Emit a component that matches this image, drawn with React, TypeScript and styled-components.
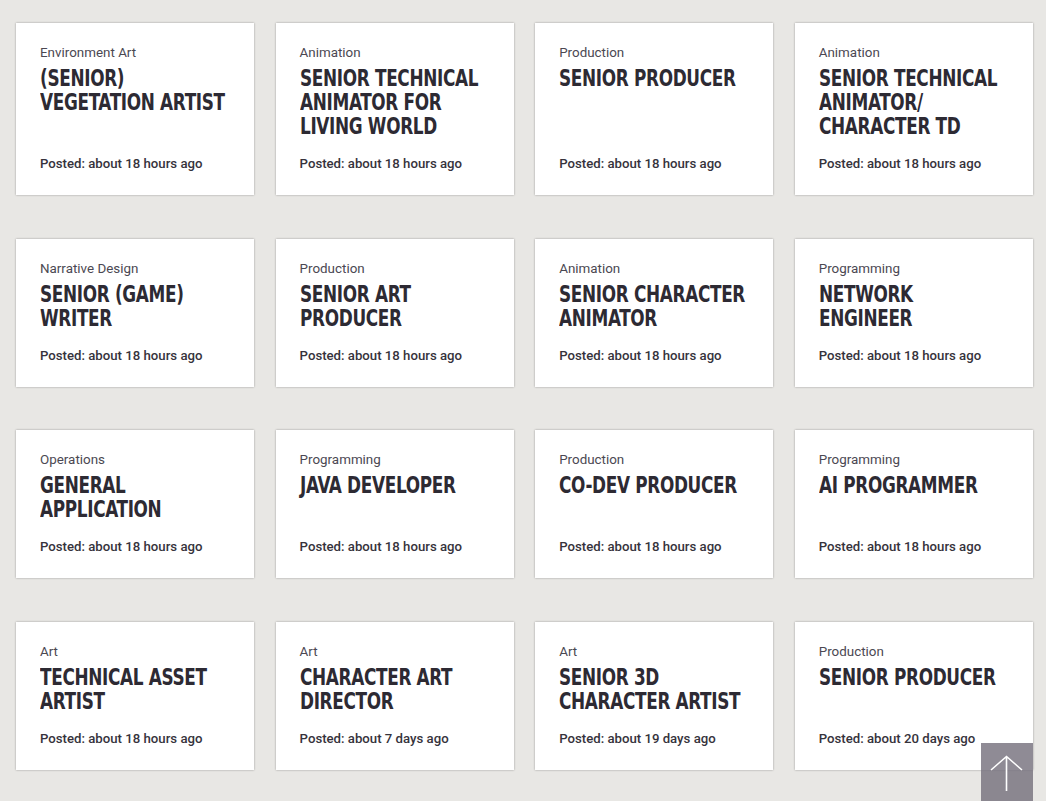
import React from 'react'
import styled, { createGlobalStyle } from 'styled-components'

const GlobalStyle = createGlobalStyle`
  html, body {
    margin: 0;
    padding: 0;
    background: #e8e7e4;
  }
  body {
    font-family: Roboto, 'Liberation Sans', sans-serif;
  }
`

const Page = styled.main`
  padding: 23px 13px 33px 16px;
`

const Grid = styled.section`
  display: grid;
  grid-template-columns: repeat(4, minmax(0, 1fr));
  column-gap: 21.3px;
  row-gap: 43.5px;
`

const Card = styled.a`
  display: flex;
  flex-direction: column;
  min-width: 0;
  background: #ffffff;
  box-shadow: 0 0 2px rgba(0, 0, 0, 0.35);
  padding: 20px 24px 22px;
  text-decoration: none;
  box-sizing: border-box;
`

const Category = styled.div`
  font-size: 13.4px;
  line-height: 20px;
  color: #4b4852;
`

/* condensed display face: DejaVu Sans Condensed squeezed to the narrow proportions */
const Title = styled.h3`
  margin: 3px 0 0;
  font-family: 'DejaVu Sans Condensed', 'DejaVu Sans', sans-serif;
  font-weight: 700;
  font-size: 23px;
  line-height: 24px;
  letter-spacing: -0.4px;
  color: #2d2a33;
  text-transform: uppercase;
  white-space: nowrap;
  transform: scaleX(0.815);
  transform-origin: left top;
`

const Posted = styled.div`
  margin-top: auto;
  padding-top: 17px;
  font-size: 13.2px;
  line-height: 18px;
  font-weight: 500;
  color: #36333c;
`

const ScrollTop = styled.button`
  position: fixed;
  right: 13px;
  bottom: 0;
  width: 52px;
  height: 58px;
  border: none;
  padding: 0;
  background: rgba(118, 114, 126, 0.82);
  display: flex;
  align-items: flex-start;
  justify-content: center;
  cursor: pointer;
`

const jobs = [
  { cat: 'Environment Art', title: ['(Senior)', 'Vegetation Artist'], posted: 'about 18 hours ago' },
  { cat: 'Animation', title: ['Senior Technical', 'Animator for', 'Living World'], posted: 'about 18 hours ago' },
  { cat: 'Production', title: ['Senior Producer'], posted: 'about 18 hours ago' },
  { cat: 'Animation', title: ['Senior Technical', 'Animator/', 'Character TD'], posted: 'about 18 hours ago' },
  { cat: 'Narrative Design', title: ['Senior (Game)', 'Writer'], posted: 'about 18 hours ago' },
  { cat: 'Production', title: ['Senior Art', 'Producer'], posted: 'about 18 hours ago' },
  { cat: 'Animation', title: ['Senior Character', 'Animator'], posted: 'about 18 hours ago' },
  { cat: 'Programming', title: ['Network', 'Engineer'], posted: 'about 18 hours ago' },
  { cat: 'Operations', title: ['General', 'Application'], posted: 'about 18 hours ago' },
  { cat: 'Programming', title: ['Java Developer'], posted: 'about 18 hours ago' },
  { cat: 'Production', title: ['Co-Dev Producer'], posted: 'about 18 hours ago' },
  { cat: 'Programming', title: ['AI Programmer'], posted: 'about 18 hours ago' },
  { cat: 'Art', title: ['Technical Asset', 'Artist'], posted: 'about 18 hours ago' },
  { cat: 'Art', title: ['Character Art', 'Director'], posted: 'about 7 days ago' },
  { cat: 'Art', title: ['Senior 3D', 'Character Artist'], posted: 'about 19 days ago' },
  { cat: 'Production', title: ['Senior Producer'], posted: 'about 20 days ago' },
]

const ArrowUp = () => (
  <svg width="52" height="58" viewBox="0 0 52 58" fill="none">
    <path d="M10 27 L25.5 13.5 L41 27 M25.5 14 V48" stroke="#ffffff" strokeWidth="1.6" />
  </svg>
)

const App = () => (
  <>
    <GlobalStyle />
    <Page>
      <Grid>
        {jobs.map((job, i) => (
          <Card key={i} href="#">
            <Category>{job.cat}</Category>
            <Title>
              {job.title.map((line, j) => (
                <React.Fragment key={j}>
                  {j > 0 && <br />}
                  {line}
                </React.Fragment>
              ))}
            </Title>
            <Posted>Posted: {job.posted}</Posted>
          </Card>
        ))}
      </Grid>
    </Page>
    <ScrollTop aria-label="Back to top">
      <ArrowUp />
    </ScrollTop>
  </>
)

export default App
